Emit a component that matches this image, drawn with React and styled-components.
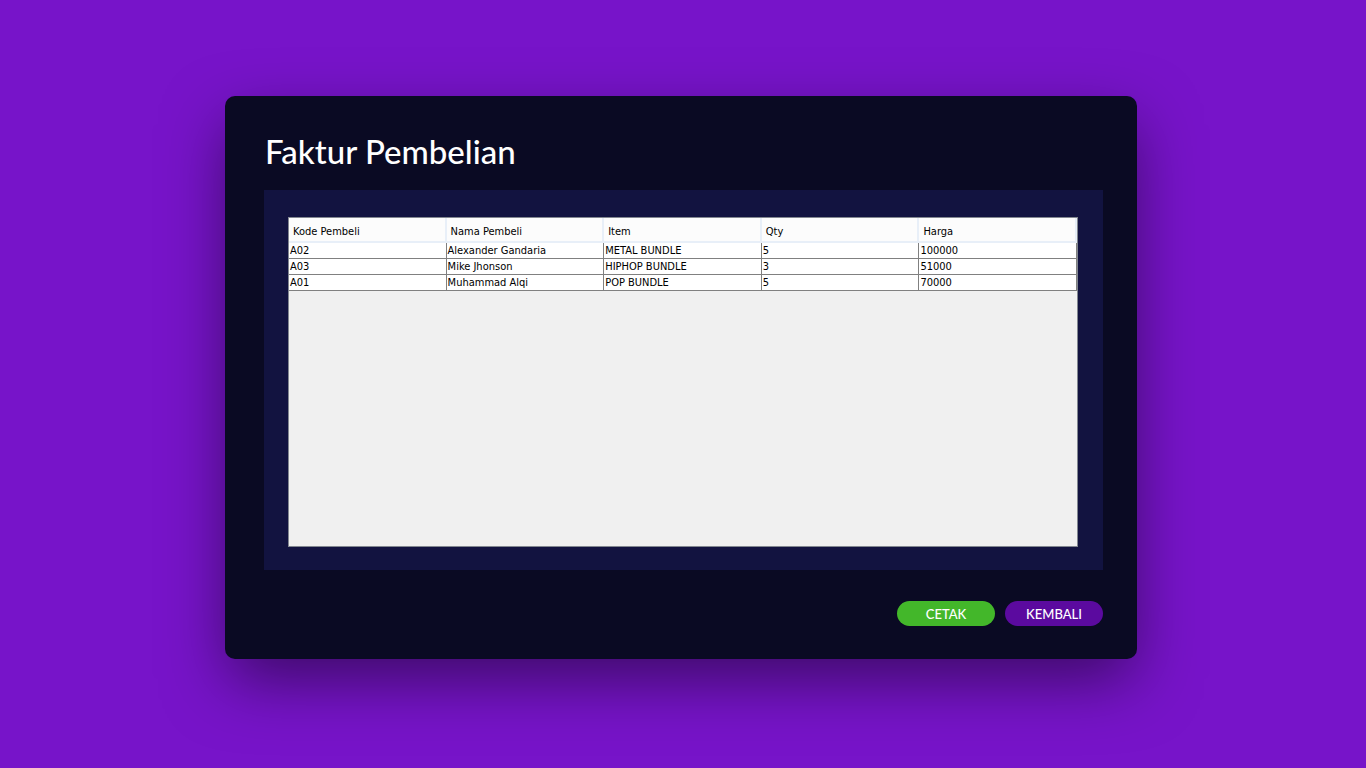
import React from "react";
import styled, { createGlobalStyle } from "styled-components";

const GlobalStyle = createGlobalStyle`
  *, *::before, *::after { box-sizing: border-box; }
  html { background: #7714c9; }
  body { margin: 0; }
`;

const Page = styled.div`
  display: flex;
  padding: 96px 229px 108px 225px;
  font-family: Lato, "Liberation Sans", sans-serif;
`;

const Card = styled.main`
  flex: 1;
  min-width: 0;
  display: flex;
  flex-direction: column;
  padding: 31px 34px 33px 39px;
  border-radius: 10px;
  background: #0a0a23;
  box-shadow: 0 24px 64px -4px rgba(0, 0, 0, 0.5);
`;

const Title = styled.h1`
  margin: 0 0 15px 1px;
  font-size: 33px;
  line-height: 48px;
  font-weight: 500;
  color: #ffffff;
`;

const Panel = styled.section`
  padding: 27px 25px 23px 24px;
  background: #121340;
`;

const TableView = styled.div`
  min-height: 330px;
  border: 1px solid #828790;
  background: #f0f0f0;
`;

const Table = styled.table`
  width: 100%;
  table-layout: fixed;
  border-collapse: separate;
  border-spacing: 0;
  font-family: "DejaVu Sans Condensed", "DejaVu Sans", sans-serif;
  font-size: 11px;
  color: #000000;
`;

const HeaderCell = styled.th`
  height: 25px;
  padding: 5px 0 0 4px;
  border-right: 2px solid #e8eff8;
  border-bottom: 2px solid #e8eff8;
  background: #fcfcfc;
  font-weight: 400;
  line-height: 16px;
  text-align: left;
  white-space: nowrap;
`;

const Cell = styled.td`
  height: 16px;
  padding: 0 0 0 1px;
  border-right: 1px solid #808080;
  border-bottom: 1px solid #808080;
  background: #ffffff;
  line-height: 15px;
  white-space: nowrap;
`;

const Actions = styled.div`
  display: flex;
  justify-content: flex-end;
  gap: 10px;
  margin-top: 31px;
`;

const tones = { print: "#43b72a", back: "#5b0a9f" };

const PillButton = styled.button`
  width: 98px;
  height: 25px;
  padding: 0;
  border: 0;
  border-radius: 13px;
  background: ${({ $tone }) => tones[$tone]};
  color: #ffffff;
  font-family: inherit;
  font-size: 13px;
  font-weight: 500;
  line-height: 24px;
  cursor: pointer;
`;

const columns = ["Kode Pembeli", "Nama Pembeli", "Item", "Qty", "Harga"];

const rows = [
  ["A02", "Alexander Gandaria", "METAL BUNDLE", "5", "100000"],
  ["A03", "Mike Jhonson", "HIPHOP BUNDLE", "3", "51000"],
  ["A01", "Muhammad Alqi", "POP BUNDLE", "5", "70000"],
];

export default function App() {
  return (
    <>
      <GlobalStyle />
      <Page>
        <Card>
          <Title id="invoice-title">Faktur Pembelian</Title>
          <Panel>
            <TableView>
              <Table aria-labelledby="invoice-title">
                <thead>
                  <tr>
                    {columns.map((name) => (
                      <HeaderCell key={name} scope="col">{name}</HeaderCell>
                    ))}
                  </tr>
                </thead>
                <tbody>
                  {rows.map((row) => (
                    <tr key={row[0]}>
                      {row.map((value, i) => (
                        <Cell key={columns[i]}>{value}</Cell>
                      ))}
                    </tr>
                  ))}
                </tbody>
              </Table>
            </TableView>
          </Panel>
          <Actions>
            <PillButton type="button" $tone="print">CETAK</PillButton>
            <PillButton type="button" $tone="back">KEMBALI</PillButton>
          </Actions>
        </Card>
      </Page>
    </>
  );
}
